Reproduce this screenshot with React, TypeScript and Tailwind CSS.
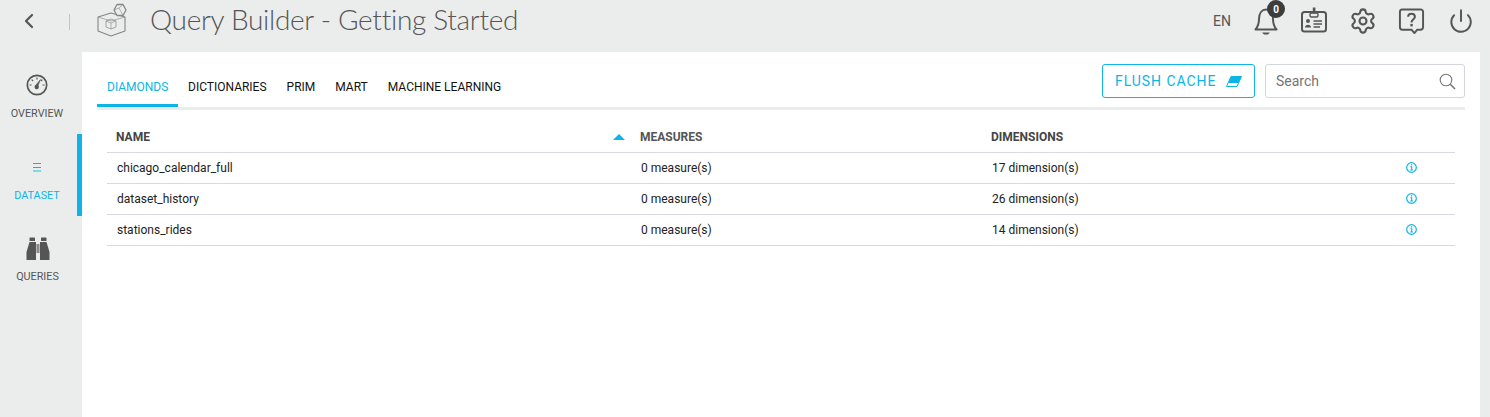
import { ChevronLeft, Settings, Power } from "lucide-react";

const rows = [
    { name: "chicago_calendar_full", measures: "0 measure(s)", dimensions: "17 dimension(s)" },
    { name: "dataset_history", measures: "0 measure(s)", dimensions: "26 dimension(s)" },
    { name: "stations_rides", measures: "0 measure(s)", dimensions: "14 dimension(s)" },
];

function CubeLogo() {
    return (
        <svg width="30" height="34" viewBox="0 0 30 34" fill="none" stroke="#858585" strokeWidth="1.1" strokeLinejoin="round">
            <path d="M1 14 L14 10 L28 14 L28 28 L14 33 L1 28 Z" />
            <path d="M1 14 L14 18 L28 14" strokeWidth="0.6" />
            <path d="M9 18 L14 16 L19 18 L19 24 L14 26 L9 24 Z" strokeWidth="0.7" />
            <path d="M9 18 L14 20 L19 18 M14 20 V26" strokeWidth="0.6" />
            <path d="M20 1.5 L26 1.5 L29 7 L26 12.5 L20 12.5 L17 7 Z" fill="#ebeded" strokeWidth="1.3" />
            <path d="M17 7 L22 5 L26 1.5 M22 5 L26 12.5" strokeWidth="0.6" />
        </svg>
    );
}

function BellIcon() {
    return (
        <svg width="26" height="28" viewBox="0 0 26 28" fill="none" stroke="#555" strokeWidth="2" strokeLinejoin="round">
            <path d="M2.5 22.5 C5 19.5 6 16.5 6 12 C6 6 9 2.5 13 2.5 C17 2.5 20 6 20 12 C20 16.5 21 19.5 23.5 22.5 Z" />
            <path d="M9 25.5 H17 L15 27.5 H11 Z" fill="#555" stroke="none" />
        </svg>
    );
}

function BadgeIcon() {
    return (
        <svg width="28" height="28" viewBox="0 0 28 28" fill="none" stroke="#555" strokeWidth="2">
            <rect x="2" y="5" width="24" height="19.5" rx="2.5" />
            <rect x="10" y="6" width="8" height="4" rx="1.5" fill="#ebeded" strokeWidth="1.4" />
            <rect x="12.8" y="0.5" width="2.6" height="6" fill="#555" stroke="none" />
            <circle cx="8" cy="14" r="2" fill="#555" stroke="none" />
            <path d="M5 20.5 C5 16.8 11 16.8 11 20.5 Z" fill="#555" stroke="none" />
            <path d="M13.5 14 H22 M13.5 17 H22 M13.5 20 H20" strokeWidth="1.3" />
        </svg>
    );
}

function HelpIcon() {
    return (
        <svg width="27" height="28" viewBox="0 0 28 28" fill="none" stroke="#555" strokeWidth="2">
            <path d="M4.5 2 H23.5 A2.5 2.5 0 0 1 26 4.5 V20.5 A2.5 2.5 0 0 1 23.5 23 H20 L17 26.5 L14 23 H4.5 A2.5 2.5 0 0 1 2 20.5 V4.5 A2.5 2.5 0 0 1 4.5 2 Z" strokeLinejoin="round" />
            <path d="M10.5 9.5 C10.5 5.5 17.5 5.5 17.5 9.5 C17.5 12.5 14 12.5 14 15.5" strokeWidth="2.1" />
            <rect x="12.8" y="17" width="2.5" height="2.6" fill="#555" stroke="none" />
        </svg>
    );
}

function GaugeIcon() {
    return (
        <svg width="22" height="22" viewBox="0 0 22 22" fill="none" stroke="#555">
            <circle cx="11" cy="11" r="9.7" strokeWidth="1.7" />
            <path d="M11 3.5 V5.5 M3.5 11 H5.5 M16.5 11 H18.5 M5.7 5.7 L7 7 M16.3 5.7 L15 7" strokeWidth="1.2" />
            <path d="M14.5 5.5 L11.8 12 L9.8 11.2 Z" fill="#555" strokeWidth="0.6" />
            <circle cx="10.7" cy="13" r="2.2" fill="#555" stroke="none" />
        </svg>
    );
}

function BinocularsIcon() {
    return (
        <svg width="24" height="24" viewBox="0 0 24 24" fill="#555">
            <rect x="3.5" y="0.5" width="5.5" height="3.5" rx="0.6" />
            <rect x="15" y="0.5" width="5.5" height="3.5" rx="0.6" />
            <path d="M3.5 5 H10 V23 H0.5 V15 Z" />
            <path d="M14 5 H20.5 L23.5 15 V23 H14 Z" />
            <rect x="10.5" y="7" width="3" height="9" fill="#8a8a8a" />
        </svg>
    );
}

function EraserIcon() {
    return (
        <svg width="16" height="11" viewBox="0 0 16 11">
            <path d="M5 0.5 H15.5 L11 10.5 H0.5 Z" fill="#fff" stroke="#0db4e8" strokeWidth="1" strokeLinejoin="round" />
            <path d="M5 0.5 H15.5 L12.6 7 H2.2 Z" fill="#0db4e8" />
        </svg>
    );
}

function InfoIcon() {
    return (
        <svg width="11" height="11" viewBox="0 0 11 11" fill="none" stroke="#0db4e8">
            <circle cx="5.5" cy="5.5" r="4.8" strokeWidth="1.2" />
            <path d="M4.3 4.7 H5.7 V8 M4.2 8 H7" strokeWidth="1.1" />
            <path d="M5 2.3 H6.2 V3.4 H5 Z" fill="#0db4e8" stroke="none" />
        </svg>
    );
}

function SearchIcon() {
    return (
        <svg width="17" height="17" viewBox="0 0 17 17" fill="none" stroke="#777">
            <circle cx="7" cy="7" r="5.8" strokeWidth="1.1" />
            <path d="M11.3 11.3 L16 16" strokeWidth="1.6" />
        </svg>
    );
}

function TopBar() {
    return (
        <header className="h-[52px] flex items-center pb-[10px] bg-[#ebeded] text-[#555]">
            <div className="w-[58px] flex justify-center">
                <ChevronLeft size={24} strokeWidth={2.2} color="#555" />
            </div>
            <div className="ml-[11px] w-px h-[16px] bg-[#c4c4c4] mt-[2px]"></div>
            <div className="ml-[27px] mb-[3px]">
                <CubeLogo />
            </div>
            <h1 className="ml-[23px] mb-[4px] text-[28px] font-light font-['Lato',sans-serif] tracking-[-0.3px] leading-none text-[#555]">
                Query Builder - Getting Started
            </h1>
            <div className="ml-auto flex items-center pr-[16px]">
                <span className="text-[14px] font-['Roboto',sans-serif] mr-[22px] mt-[1px]">EN</span>
                <div className="relative mr-[21px]">
                    <BellIcon />
                    <span className="absolute -top-[7px] -right-[6px] w-[18px] h-[18px] rounded-full bg-[#3d3d3d] text-white text-[10px] font-bold font-['Roboto',sans-serif] flex items-center justify-center">
                        0
                    </span>
                </div>
                <div className="mr-[21px]"><BadgeIcon /></div>
                <div className="mr-[21px]"><Settings size={28} strokeWidth={1.8} color="#555" /></div>
                <div className="mr-[23px]"><HelpIcon /></div>
                <Power size={26} strokeWidth={1.8} color="#555" />
            </div>
        </header>
    );
}

function SideBar() {
    return (
        <aside className="w-[82px] shrink-0 bg-[#ebeded] flex flex-col font-['Roboto',sans-serif] text-[10.8px]">
            <div className="h-[82px] flex flex-col items-center pt-[22px] pr-[8px] text-[#555]">
                <GaugeIcon />
                <span className="mt-[11px] leading-[14px]">OVERVIEW</span>
            </div>
            <div className="h-[82px] flex flex-col items-center pt-[29px] pr-[3px] border-r-[5px] border-[#0db4e8] text-[#0db4e8]">
                <div className="w-[8px] flex flex-col gap-[2.5px]">
                    <div className="h-px bg-[#0db4e8]"></div>
                    <div className="h-px bg-[#0db4e8]"></div>
                    <div className="h-[2px] bg-[#7fd6f2]"></div>
                </div>
                <span className="mt-[17px] leading-[14px]">DATASET</span>
            </div>
            <div className="h-[82px] flex flex-col items-center pt-[21px] pr-[7px] text-[#555]">
                <BinocularsIcon />
                <span className="mt-[9px] leading-[14px]">QUERIES</span>
            </div>
        </aside>
    );
}

function Tabs() {
    return (
        <div className="flex items-end justify-between h-[58px] border-b-[3px] border-[#ebeded] mx-[15px]">
            <div className="flex text-[12px] font-normal leading-[14px] text-[#111]">
                <div className="w-[81px] h-[27px] border-b-[3px] border-[#0db4e8] pl-[10px] text-[#0db4e8]">DIAMONDS</div>
                <div className="ml-[10px]">DICTIONARIES</div>
                <div className="ml-[20px]">PRIM</div>
                <div className="ml-[20px]">MART</div>
                <div className="ml-[20px]">MACHINE LEARNING</div>
            </div>
            <div className="flex self-start mt-[12px] gap-[10px]">
                <button className="w-[153px] h-[34px] border border-[#0db4e8] rounded-[3px] flex items-center pl-[12px] text-[14px] tracking-[0.95px] text-[#0db4e8]">
                    FLUSH CACHE
                    <span className="ml-[10px]"><EraserIcon /></span>
                </button>
                <div className="w-[200px] h-[34px] border border-[#d5d5dc] rounded-[3px] flex items-center justify-between pl-[10px] pr-[8px] text-[14px] text-[#757575]">
                    Search
                    <SearchIcon />
                </div>
            </div>
        </div>
    );
}

function Table() {
    return (
        <div className="mx-[25px] text-[12px]">
            <div className="h-[43px] flex items-center border-b border-[#d8d8e0] text-[#444] font-bold text-[12px] pt-[11px]">
                <div className="w-[533px] pl-[9px] flex items-center justify-between pr-[15px]">
                    NAME
                    <div className="w-0 h-0 border-x-[6px] border-x-transparent border-b-[6px] border-b-[#0db4e8]"></div>
                </div>
                <div className="w-[351px] text-[#555]">MEASURES</div>
                <div className="text-[#444]">DIMENSIONS</div>
            </div>
            {rows.map((x) => (
                <div key={x.name} className="h-[31px] flex items-center border-b border-[#d8d8e0] text-[#222]">
                    <div className="w-[534px] pl-[10px]">{x.name}</div>
                    <div className="w-[351px]">{x.measures}</div>
                    <div className="flex-1">{x.dimensions}</div>
                    <div className="pr-[38px] pb-[2px]"><InfoIcon /></div>
                </div>
            ))}
        </div>
    );
}

export default function App() {
    return (
        <div className="w-[1490px] h-[417px] overflow-hidden bg-[#ebeded] font-['Roboto',sans-serif]">
            <TopBar />
            <div className="flex h-[365px]">
                <SideBar />
                <main className="flex-1 bg-white mr-[10px]">
                    <Tabs />
                    <Table />
                </main>
            </div>
        </div>
    );
}
